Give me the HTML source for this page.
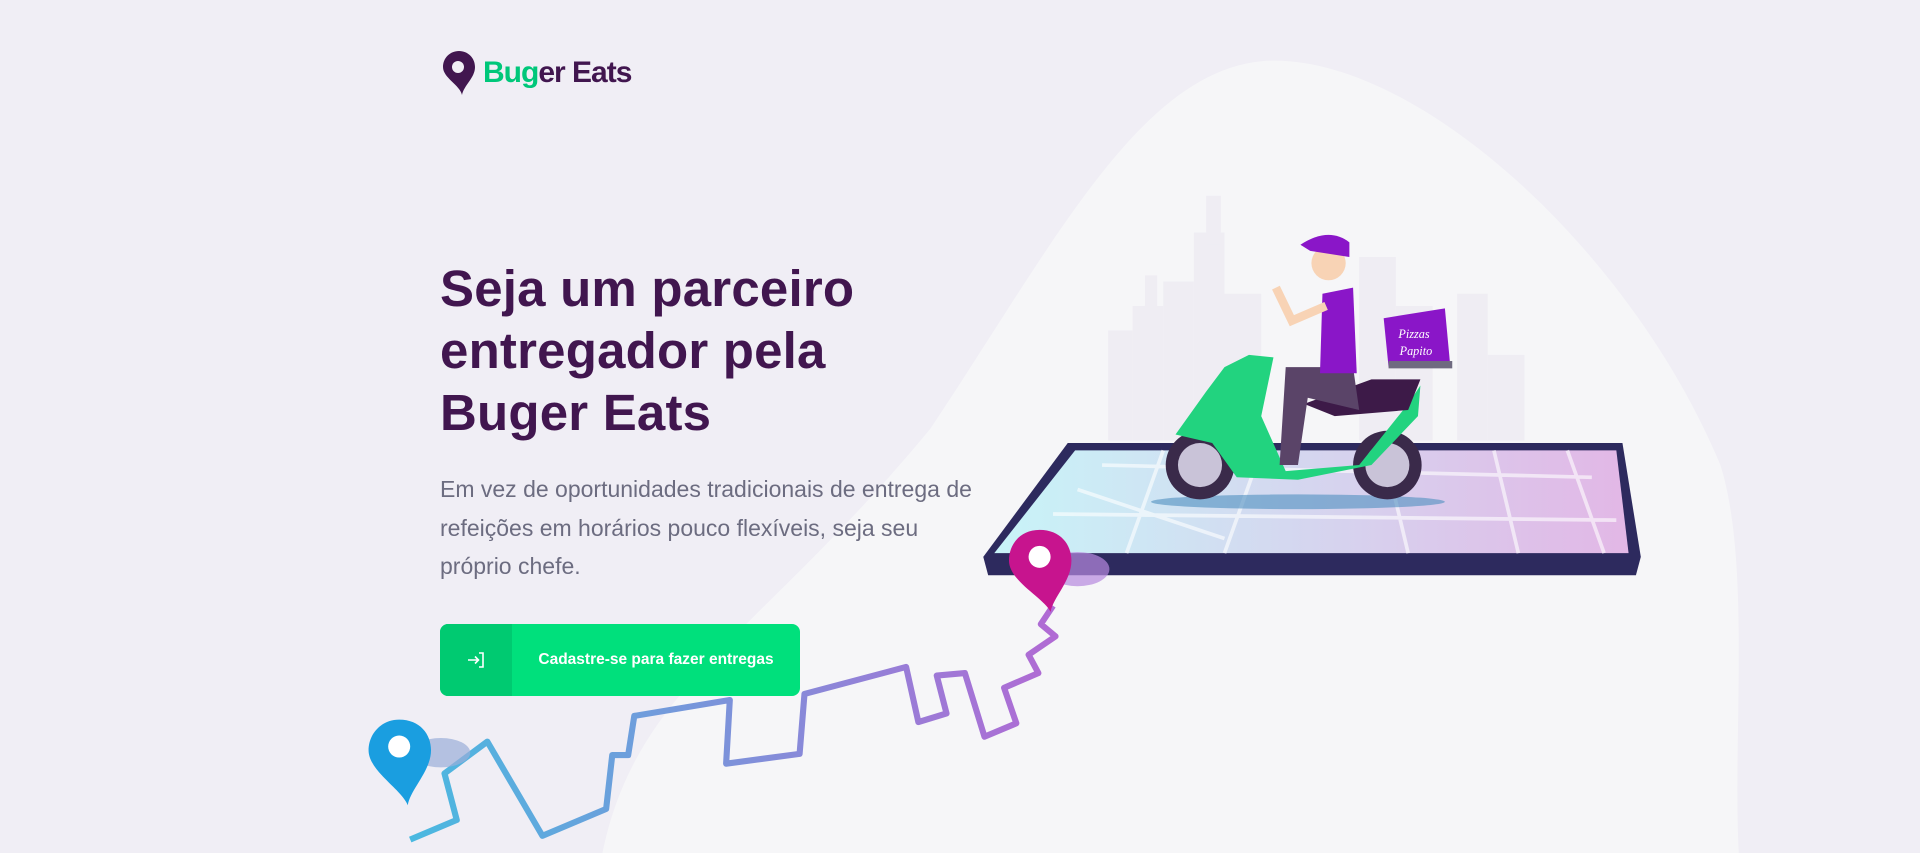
<!DOCTYPE html>
<html><head><meta charset="utf-8"><style>
html,body{margin:0;padding:0}
body{width:1920px;height:853px;background:#f0eef5;position:relative;overflow:hidden;font-family:"Liberation Sans",sans-serif}
svg.bg{position:absolute;left:0;top:0;width:1920px;height:853px}
.logo{position:absolute;left:443px;top:51px;display:flex;align-items:center}
.logo span{font-size:30px;font-weight:bold;letter-spacing:-1px;margin-left:8px;color:#41164f}
.logo b{color:#00c77a}
h1{position:absolute;left:440px;top:258px;margin:0;font-size:51px;line-height:62px;color:#41164f;font-weight:bold;letter-spacing:0.2px}
p{position:absolute;left:440px;top:470px;margin:0;font-size:23px;line-height:38.5px;color:#6c6c80;width:555px}
.btn{position:absolute;left:440px;top:624px;width:360px;height:72px;border-radius:8px;background:#00e07c;overflow:hidden;display:flex;color:#fff;font-size:15.5px;font-weight:bold}
.btn .ic{width:72px;height:72px;background:#00ca71;display:flex;align-items:center;justify-content:center}
.btn .t{flex:1;display:flex;align-items:center;justify-content:center}
</style></head><body>
<svg class="bg" viewBox="0 0 1568 697" preserveAspectRatio="none">
<defs><linearGradient id="sc" x1="0" x2="1"><stop offset="0" stop-color="#c8f4f8"/><stop offset="1" stop-color="#e2b7e6"/></linearGradient>
<linearGradient id="ln" x1="0" x2="1"><stop offset="0" stop-color="#4ab9e0"/><stop offset="1" stop-color="#b16ad4"/></linearGradient></defs>
<path d="M492 697 C520 560 620 520 760 350 C860 200 930 60 1030 50 C1150 40 1330 200 1405 380 C1430 460 1415 600 1420 697 Z" fill="#f6f6f8"/>
<g fill="#efedf3">
<rect x="905" y="270" width="20" height="90"/><rect x="925" y="250" width="25" height="110"/><rect x="935" y="225" width="10" height="30"/>
<rect x="950" y="230" width="25" height="130"/><rect x="975" y="190" width="25" height="170"/><rect x="985" y="160" width="12" height="40"/>
<rect x="1000" y="240" width="30" height="120"/><rect x="1110" y="210" width="30" height="150"/><rect x="1140" y="250" width="30" height="110"/>
<rect x="1190" y="240" width="25" height="120"/><rect x="1215" y="290" width="30" height="70"/>
</g>
<path d="M872 362 L1325 362 L1340 455 L1336 470 L807 470 L803 455 Z" fill="#2d2a5e"/>
<path d="M878 368 L1320 368 L1330 452 L812 452 Z" fill="url(#sc)"/>
<g stroke="#fff" stroke-opacity=".6" stroke-width="3" fill="none">
<path d="M900 380 L1300 390 M860 420 L1320 425 M950 368 L920 452 M1030 368 L1000 452 M1130 368 L1150 452 M1220 368 L1240 452 M1280 368 L1310 452 M880 400 L1000 440"/></g>
<ellipse cx="1060" cy="410" rx="120" ry="6" fill="#4f8fc0" opacity=".6"/>
<circle cx="980" cy="380" r="28" fill="#3a2a4a"/><circle cx="980" cy="380" r="18" fill="#c9c3d8"/>
<circle cx="1133" cy="380" r="28" fill="#3a2a4a"/><circle cx="1133" cy="380" r="18" fill="#c9c3d8"/>
<path d="M960 355 L985 320 L1000 300 L1020 290 L1040 292 L1030 340 L1050 385 L1110 380 L1150 330 L1160 315 L1158 340 L1120 380 L1060 392 L1010 390 L990 362 Z" fill="#22d37f"/>
<path d="M1065 330 L1120 310 L1160 310 L1150 335 L1090 340 Z" fill="#3d1a48"/>
<path d="M1050 300 L1045 380 L1060 380 L1068 325 L1110 335 L1105 300 Z" fill="#5a4468"/>
<path d="M1080 240 L1105 235 L1108 305 L1078 305 Z" fill="#8a16c8"/>
<circle cx="1085" cy="215" r="14" fill="#f8d3b5"/>
<path d="M1062 200 Q1085 185 1102 198 L1102 210 L1070 205 Z" fill="#8a16c8"/>
<path d="M1083 250 L1055 262 L1042 235" stroke="#f8d3b5" stroke-width="7" fill="none"/>
<path d="M1130 260 L1180 252 L1184 295 L1134 300 Z" fill="#8a16c8"/><rect x="1134" y="295" width="52" height="6" fill="#6f6a80"/>
<text x="1142" y="276" font-size="10" fill="#fff" font-style="italic" font-family="Liberation Serif,serif">Pizzas</text>
<text x="1143" y="290" font-size="10" fill="#fff" font-style="italic" font-family="Liberation Serif,serif">Papito</text>
<polyline points="335,686 373,670 363,632 398,606 443,683 495,661 500,617 513,617 518,585 596,572 593,624 653,616 657,567 740,545 750,590 773,583 765,552 788,550 804,602 830,591 820,562 848,550 840,535 862,520 850,510 860,495" fill="none" stroke="url(#ln)" stroke-width="5" stroke-linejoin="round"/>
<ellipse cx="360" cy="615" rx="24" ry="12" fill="#9aaed8" opacity=".7"/>
<path d="M326 588 C343 588 352 600 352 613 C352 630 335 645 333 658 C328 645 301 630 301 613 C301 600 311 588 326 588Z" fill="#1a9ee0"/>
<circle cx="326" cy="610" r="9" fill="#fff"/>
<ellipse cx="880" cy="465" rx="26" ry="14" fill="#b689de" opacity=".7"/>
<path d="M849 433 C866 433 875 445 875 458 C875 475 860 488 858 500 C852 488 824 475 824 458 C824 445 833 433 849 433Z" fill="#c7148e"/>
<circle cx="849" cy="455" r="9" fill="#fff"/>
</svg>
<div class="logo"><svg width="32" height="44" viewBox="0 0 32 44"><path d="M16 0C25 0 32 7 32 16C32 27 21 34 19 44C17 34 0 27 0 16C0 7 7 0 16 0Z" fill="#41164f"/><circle cx="15" cy="16" r="6" fill="#f0eef5"/></svg><span><b>Bug</b>er Eats</span></div>
<h1>Seja um parceiro<br>entregador pela<br>Buger Eats</h1>
<p>Em vez de oportunidades tradicionais de entrega de refeições em horários pouco flexíveis, seja seu próprio chefe.</p>
<div class="btn"><div class="ic"><svg width="18" height="18" viewBox="0 0 18 18" fill="none" stroke="#fff" stroke-width="1.6"><path d="M1 9H11M8 5.5L11.5 9L8 12.5M12 2H16V16H12"/></svg></div><div class="t">Cadastre-se para fazer entregas</div></div>
</body></html>
